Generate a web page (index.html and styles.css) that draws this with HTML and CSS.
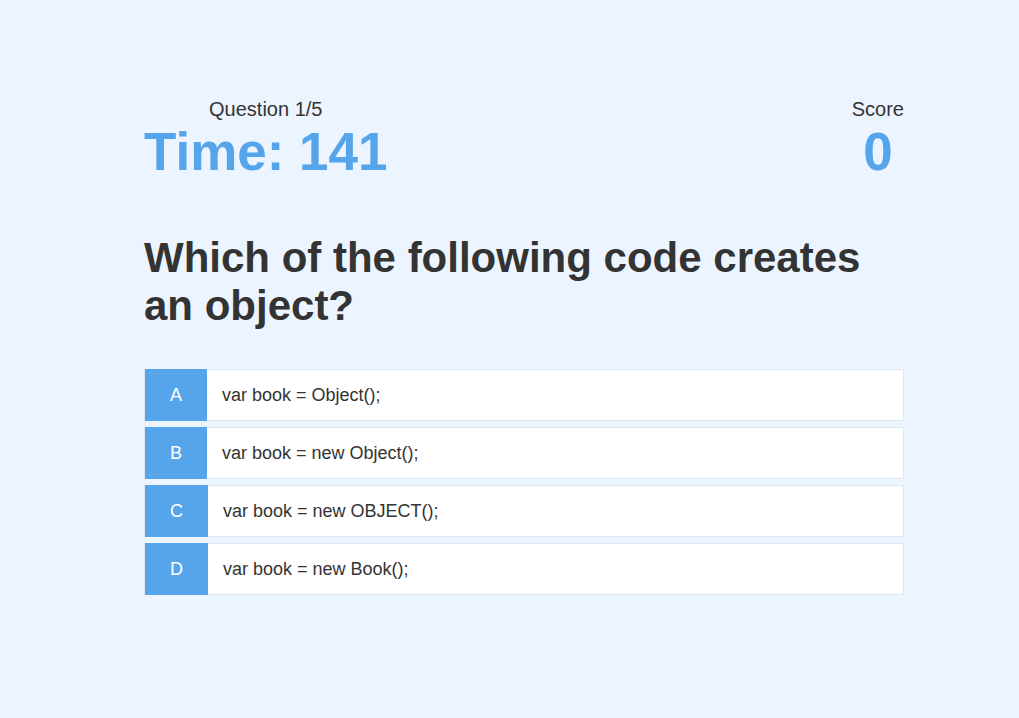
FILE: index.html
```html
<!DOCTYPE html>
<html lang="en">
<head>
<meta charset="utf-8">
<title>Quiz</title>
<link rel="stylesheet" href="styles.css">
</head>
<body>
<div class="container">
  <div class="hud">
    <div class="hud-item">
      <p class="hud-prefix">Question 1/5</p>
      <h1 class="hud-main">Time: 141</h1>
    </div>
    <div class="hud-item">
      <p class="hud-prefix">Score</p>
      <h1 class="hud-main">0</h1>
    </div>
  </div>
  <h2 class="question">Which of the following code creates an object?</h2>
  <div class="choices">
    <div class="choice"><span class="choice-prefix">A</span><span class="choice-text">var book = Object();</span></div>
    <div class="choice"><span class="choice-prefix">B</span><span class="choice-text">var book = new Object();</span></div>
    <div class="choice"><span class="choice-prefix wide">C</span><span class="choice-text">var book = new OBJECT();</span></div>
    <div class="choice"><span class="choice-prefix wide">D</span><span class="choice-text">var book = new Book();</span></div>
  </div>
</div>
</body>
</html>
```
FILE: styles.css
```css
* { box-sizing: border-box; }
html, body {
  margin: 0;
  padding: 0;
  background: #ecf5ff;
  font-family: "Liberation Sans", Arial, sans-serif;
  color: #333;
}
.container {
  width: 760px;
  margin-left: 144px;
  padding-top: 98px;
}
.hud {
  display: flex;
  justify-content: space-between;
}
.hud-item {
  display: flex;
  flex-direction: column;
  align-items: center;
}
.hud-prefix {
  margin: 0;
  font-size: 20px;
  line-height: 23px;
}
.hud-main {
  margin: 0;
  font-size: 53px;
  line-height: 61px;
  font-weight: 700;
  color: #56a5eb;
}
.question {
  margin: 52px 0 0 0;
  font-size: 42px;
  line-height: 48px;
  font-weight: 700;
  color: #333;
}
.choices {
  margin-top: 39px;
  display: flex;
  flex-direction: column;
  gap: 6px;
}
.choice {
  display: flex;
  align-items: stretch;
  height: 52px;
  background: #fff;
  border: 1px solid #dce7f4;
}
.choice-prefix {
  width: 62px;
  margin: -1px 0 -1px 0;
  background: #56a5eb;
  color: #fff;
  font-size: 18px;
  display: flex;
  align-items: center;
  justify-content: center;
}
.choice-prefix.wide { width: 63px; }
.choice-text {
  display: flex;
  align-items: center;
  padding-left: 15px;
  font-size: 18px;
  color: #333;
}
```
